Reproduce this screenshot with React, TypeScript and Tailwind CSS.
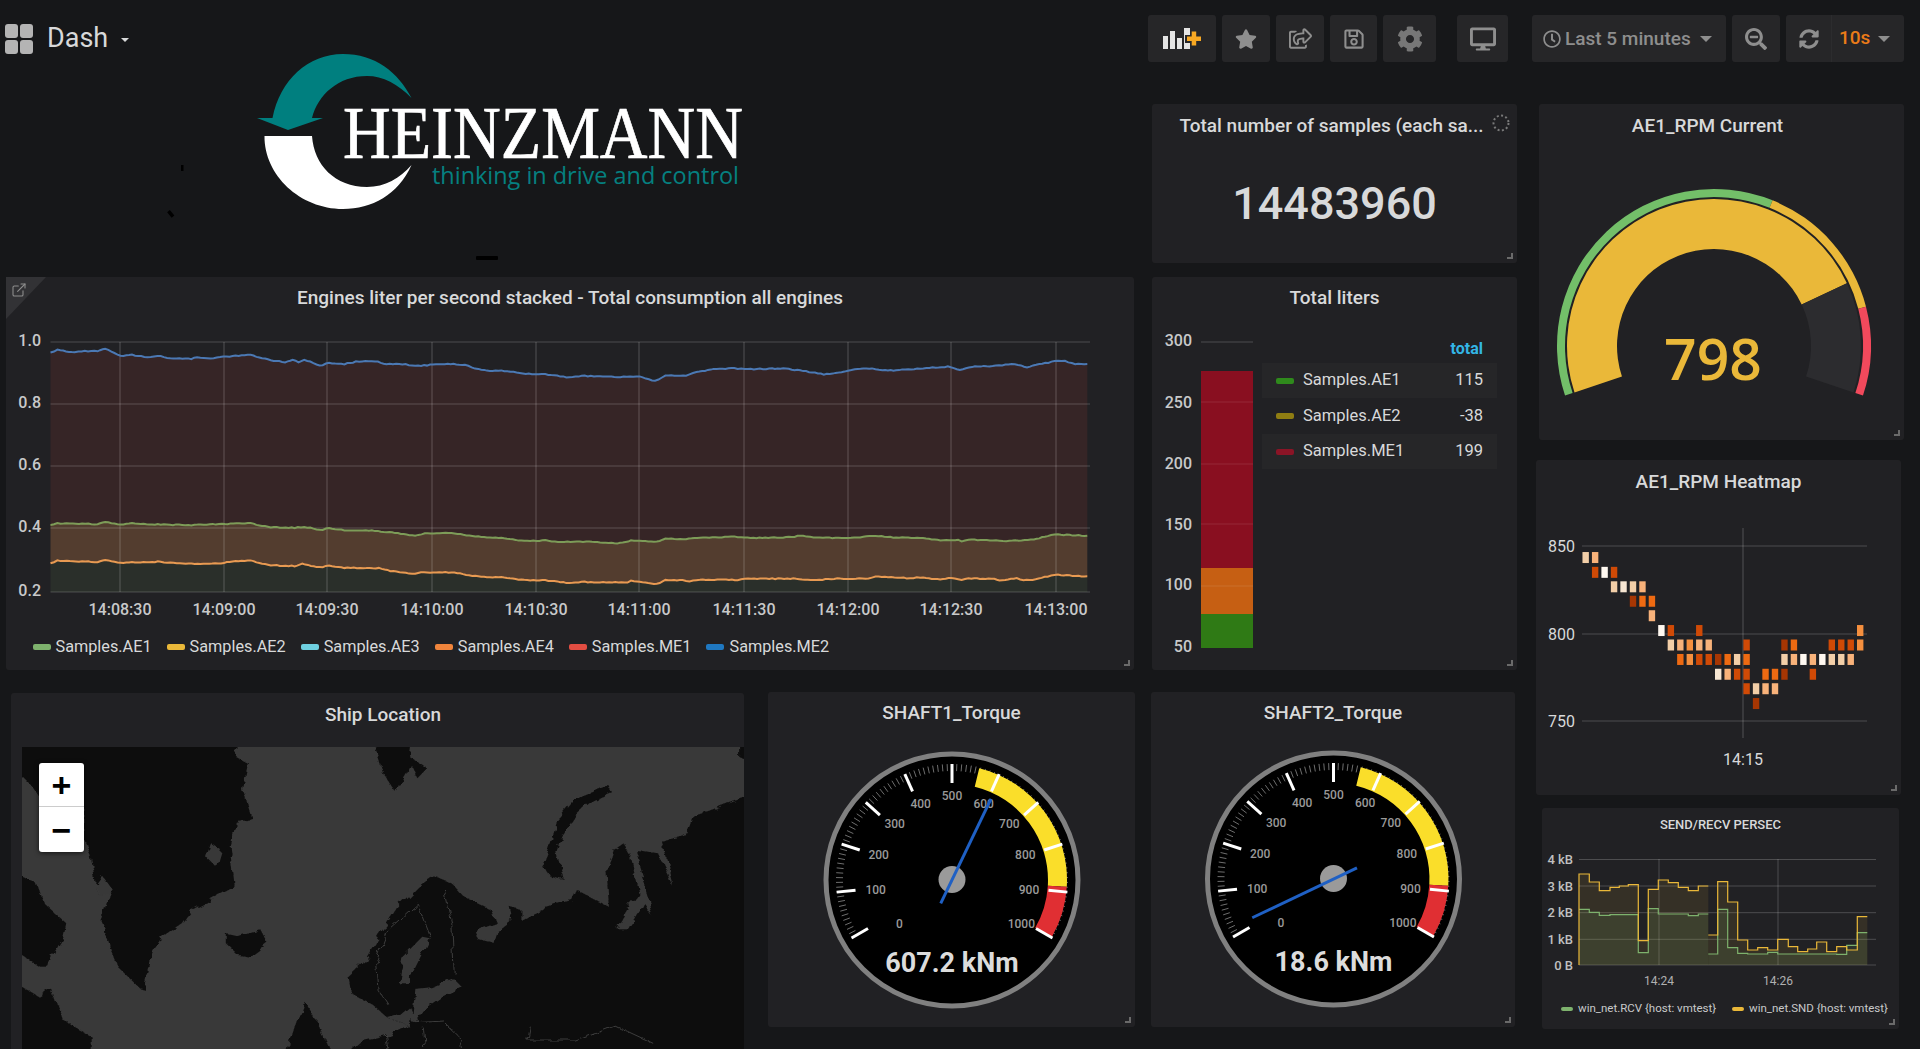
import React from "react";
import { FaStar, FaRegShareSquare, FaRegSave, FaCog, FaDesktop, FaRegClock, FaSearchMinus, FaSyncAlt } from "react-icons/fa";
import { ExternalLink } from "lucide-react";

type P = [number, number];

const z3 = (a: number[][]): P[] => a.map(([x, y]) => [x / 2.6133, 270 + y / 3]);
const z4 = (a: number[][]): P[] => a.map(([x, y]) => [600 + x / 2.904, 270 + y / 3]);

function rough(pts: P[]): P[] {
  const out: P[] = [];
  for (let i = 0; i < pts.length - 1; i++) {
    const [x0, y0] = pts[i];
    const [x1, y1] = pts[i + 1];
    const n = Math.max(1, Math.round((x1 - x0) / 3));
    for (let k = 0; k < n; k++) {
      const t = k / n;
      const x = x0 + (x1 - x0) * t;
      const noise = Math.sin(x * 12.9898) * 43758.5453;
      const j = (noise - Math.floor(noise) - 0.5) * 0.9;
      out.push([x, y0 + (y1 - y0) * t + j]);
    }
  }
  out.push(pts[pts.length - 1]);
  return out;
}

const blue = rough([
  ...z3([[132,248],[150,240],[195,247],[205,243],[255,243],[275,235],[315,257],[345,255],[385,261],[420,258],[445,265],[500,266],[515,261],[550,265],[600,259],[655,255],[700,269],[745,277],[765,270],[780,276],[795,268],[835,287],[860,279],[900,282],[930,275],[980,273],[1010,282],[1060,283],[1085,288],[1170,281],[1215,285],[1250,298],[1280,302],[1310,302],[1390,313],[1425,313],[1480,321],[1520,318]]),
  ...z4([[0,318],[50,321],[115,320],[160,333],[190,317],[250,316],[280,306],[330,297],[390,295],[420,298],[500,296],[540,296],[590,303],[650,313],[710,305],[740,297],[790,295],[820,301],[860,301],[930,295],[1010,290],[1045,299],[1080,290],[1140,288],[1205,282],[1240,291],[1320,274],[1350,273],[1380,282],[1415,282]]),
]);
const green = rough([
  ...z3([[132,765],[150,760],[255,762],[275,755],[315,763],[345,760],[420,764],[500,765],[580,762],[655,760],[700,771],[770,773],[795,770],[835,780],[860,775],[900,780],[980,782],[1040,790],[1085,798],[1110,791],[1180,789],[1250,800],[1310,804],[1370,813],[1425,811],[1450,816],[1540,815]]),
  ...z4([[0,817],[50,820],[90,812],[165,815],[190,806],[250,807],[290,803],[390,800],[420,804],[540,802],[590,797],[620,803],[720,804],[800,797],[860,803],[930,803],[980,810],[1040,810],[1050,815],[1070,810],[1150,811],[1180,813],[1260,809],[1300,797],[1330,794],[1415,797]]),
]);
const orange = rough([
  ...z3([[132,880],[150,872],[255,876],[275,869],[315,878],[345,877],[420,875],[470,881],[570,881],[600,875],[655,872],[700,885],[770,888],[790,882],[835,892],[860,887],[900,893],[990,895],[1020,903],[1085,912],[1100,907],[1180,907],[1210,912],[1250,920],[1310,922],[1370,930],[1425,931],[1480,938],[1520,936]]),
  ...z4([[0,937],[80,938],[90,933],[165,942],[190,930],[240,930],[260,934],[290,929],[400,930],[430,926],[570,926],[620,931],[680,926],[780,926],[800,919],[900,925],[930,922],[980,928],[1020,924],[1050,931],[1070,925],[1145,926],[1160,931],[1210,925],[1230,931],[1265,929],[1300,919],[1330,915],[1415,919]]),
]);

const line = (p: P[]) => p.map(([x, y], i) => `${i ? "L" : "M"}${x.toFixed(1)} ${y.toFixed(1)}`).join(" ");
const band = (top: P[], bottom: P[]) => line(top) + " " + [...bottom].reverse().map(([x, y]) => `L${x.toFixed(1)} ${y.toFixed(1)}`).join(" ") + " Z";
const floorLine: P[] = [[blue[0][0], 592], [blue[blue.length - 1][0], 592]];

const polar = (cx: number, cy: number, r: number, deg: number): P => {
  const a = ((deg - 90) * Math.PI) / 180;
  return [cx + r * Math.cos(a), cy + r * Math.sin(a)];
};
const arcBand = (cx: number, cy: number, r0: number, r1: number, a0: number, a1: number) => {
  const [x0, y0] = polar(cx, cy, r1, a0);
  const [x1, y1] = polar(cx, cy, r1, a1);
  const [x2, y2] = polar(cx, cy, r0, a1);
  const [x3, y3] = polar(cx, cy, r0, a0);
  const large = a1 - a0 > 180 ? 1 : 0;
  return `M${x0} ${y0} A${r1} ${r1} 0 ${large} 1 ${x1} ${y1} L${x2} ${y2} A${r0} ${r0} 0 ${large} 0 ${x3} ${y3} Z`;
};

function Resize() {
  return <div className="absolute right-[4px] bottom-[4px] w-[6px] h-[6px] border-r-2 border-b-2 border-[#6a6a6a]" />;
}

function Panel({ className, children }: { className: string; children: React.ReactNode }) {
  return <div className={`relative rounded-[3px] bg-[#212124] ${className}`}>{children}<Resize /></div>;
}

function Title({ text, className }: { text: string; className: string }) {
  return <div className={`flex items-center justify-center font-medium text-[19px] text-[#d8d9da] ${className}`}>{text}</div>;
}

function Btn({ className, children }: { className: string; children: React.ReactNode }) {
  return <div className={`h-[47px] flex items-center justify-center rounded-[3px] bg-[#262628] text-[#8e8e8e] ${className}`}>{children}</div>;
}

function Caret({ size }: { size: string }) {
  return <div className={`w-0 h-0 border-x-transparent ${size}`} />;
}

function Navbar() {
  return (
    <div className="h-[78px] shrink-0 flex items-start pt-[15px] pr-[16px]">
      <div className="flex items-center h-[47px] pl-[5px]">
        <div className="grid grid-cols-2 gap-[2px] w-[28px]">
          <div className="h-[14px] rounded-[3px] bg-[#b4b4b4]" />
          <div className="h-[14px] rounded-[3px] bg-[#b4b4b4]" />
          <div className="h-[14px] rounded-[3px] bg-[#b4b4b4]" />
          <div className="h-[14px] rounded-[3px] bg-[#b4b4b4]" />
        </div>
        <span className="ml-[14px] text-[27px] text-[#d8d9da]">Dash</span>
        <div className="ml-[13px] mt-[3px]">
          <Caret size="border-x-[4px] border-t-[4px] border-t-[#d8d9da]" />
        </div>
      </div>
      <div className="ml-auto flex gap-[6px]">
        <Btn className="w-[68px]">
          <svg width="38" height="21" viewBox="0 0 38 21">
            <rect x="0" y="8" width="5" height="13" fill="#e4e4e4" />
            <rect x="7" y="3" width="5" height="18" fill="#e4e4e4" />
            <rect x="14" y="10" width="5" height="11" fill="#e4e4e4" />
            <rect x="21" y="0" width="6" height="21" fill="#e4e4e4" />
            <rect x="22" y="7" width="16" height="8" fill="#262628" />
            <rect x="24" y="8.5" width="14" height="4.5" fill="#f7a823" />
            <rect x="28.7" y="3.5" width="4.5" height="14" fill="#f7a823" />
          </svg>
        </Btn>
        <Btn className="w-[48px]"><FaStar size={22} /></Btn>
        <Btn className="w-[48px]"><FaRegShareSquare size={23} /></Btn>
        <Btn className="w-[47px]"><FaRegSave size={22} /></Btn>
        <Btn className="w-[53px]"><FaCog size={26} className="text-[#777]" /></Btn>
        <Btn className="w-[51px] ml-[15px]"><FaDesktop size={26} /></Btn>
        <Btn className="w-[194px] ml-[18px] justify-start pl-[11px]">
          <FaRegClock size={18} />
          <span className="ml-[4px] text-[19px] font-medium leading-none">Last 5 minutes</span>
          <div className="ml-[9px]"><Caret size="border-x-[6px] border-t-[6px] border-t-[#8e8e8e]" /></div>
        </Btn>
        <Btn className="w-[48px]"><FaSearchMinus size={22} /></Btn>
        <Btn className="w-[118px] justify-start">
          <div className="w-[46px] h-full flex items-center justify-center border-r border-[#2c2c2e]"><FaSyncAlt size={20} /></div>
          <span className="ml-[7px] text-[19px] font-medium text-[#eb7b18]">10s</span>
          <div className="ml-[8px]"><Caret size="border-x-[6px] border-t-[6px] border-t-[#8e8e8e]" /></div>
        </Btn>
      </div>
    </div>
  );
}

function Logo() {
  return (
    <svg width="640" height="215" viewBox="160 50 640 215" className="block ml-[160px] mt-[-28px] shrink-0">
      <path d="M257 118 L272.5 118 C 280 80 308 54 343 54 C 375 54 398 72 411.5 98 C 398 84 383 76 367 76 C 338 76 318 95 312 118 L323 118 L288 130 Z" fill="#007f7f" />
      <path d="M264.5 136 L312 136 C 314 165 335 187 367 187 C 385 187 400 178 411.5 165 C 398 195 372 209 343 209 C 300 209 264 175 264.5 136 Z" fill="#ffffff" />
      <text x="343" y="158" textLength="400" lengthAdjust="spacingAndGlyphs" stroke="#ffffff" strokeWidth="0.7" className="font-[family-name:'Liberation_Serif',serif] text-[73px]" fill="#ffffff">HEINZMANN</text>
      <text x="432" y="184" textLength="307" lengthAdjust="spacingAndGlyphs" className="font-[family-name:'Open_Sans',sans-serif] text-[24px]" fill="#058080">thinking in drive and control</text>
      <rect x="181" y="165" width="2.5" height="6" fill="#000" />
      <rect x="168" y="212" width="7" height="3.5" fill="#000" transform="rotate(50 171 213)" />
      <rect x="476" y="256" width="22" height="4" rx="1" fill="#000" />
    </svg>
  );
}

function SingleStat() {
  return (
    <Panel className="w-[365px] h-[159px] mt-[26px] ml-auto">
      <Title text="Total number of samples (each sa..." className="h-[45px] pr-[6px]" />
      <svg width="18" height="18" viewBox="0 0 18 18" className="absolute left-[340px] top-[10px]">
        <circle cx="9" cy="9" r="7.5" fill="none" stroke="#7a7a7a" strokeWidth="2" strokeDasharray="2 2.4" />
      </svg>
      <div className="h-[109px] flex items-center justify-center text-[45px] font-medium text-[#d8d9da] leading-none">14483960</div>
    </Panel>
  );
}

const gridYs = [342, 404, 466, 528, 592];
const gridYLabels = ["1.0", "0.8", "0.6", "0.4", "0.2"];
const gridXs = [120, 224, 327, 432, 536, 639, 744, 848, 951, 1056];
const timeLabels = ["14:08:30", "14:09:00", "14:09:30", "14:10:00", "14:10:30", "14:11:00", "14:11:30", "14:12:00", "14:12:30", "14:13:00"];

const legend = [
  ["Samples.AE1", "bg-[#7eb26d]"],
  ["Samples.AE2", "bg-[#eab839]"],
  ["Samples.AE3", "bg-[#6ed0e0]"],
  ["Samples.AE4", "bg-[#ef843c]"],
  ["Samples.ME1", "bg-[#e24d42]"],
  ["Samples.ME2", "bg-[#1f78c1]"],
];

function GraphPanel() {
  return (
    <Panel className="w-[1128px] h-[393px] shrink-0">
      <div className="absolute left-0 top-0 w-0 h-0 border-t-[42px] border-r-[40px] border-t-[#323235] border-r-transparent" />
      <ExternalLink size={16} strokeWidth={1.6} className="absolute left-[5px] top-[5px] text-[#8e8e8e]" />
      <Title text="Engines liter per second stacked - Total consumption all engines" className="h-[42px]" />
      <svg width="1128" height="306" viewBox="6 319 1128 306" className="block">
        <path d={band(blue, green)} fill="#362526" />
        <path d={band(green, orange)} fill="#533d2f" />
        <path d={band(orange, floorLine)} fill="#2a2f2a" />
        {gridYs.map((y, i) => (
          <g key={y}>
            <line x1="50.5" x2="1090" y1={y} y2={y} stroke="#ffffff" strokeOpacity="0.2" />
            <text x="41" y={y + 4} textAnchor="end" className="text-[16px] font-medium" fill="#c8c9ca">{gridYLabels[i]}</text>
          </g>
        ))}
        {gridXs.map((x, i) => (
          <g key={x}>
            <line x1={x} x2={x} y1="342" y2="592" stroke="#ffffff" strokeOpacity="0.22" />
            <text x={x} y="614.5" textAnchor="middle" className="text-[16px] font-medium" fill="#c8c9ca">{timeLabels[i]}</text>
          </g>
        ))}
        <path d={line(blue)} fill="none" stroke="#4b79b4" strokeWidth="2" />
        <path d={line(green)} fill="none" stroke="#7d9c58" strokeWidth="2" />
        <path d={line(orange)} fill="none" stroke="#e89a52" strokeWidth="2" />
      </svg>
      <div className="flex items-center pl-[26.5px] gap-[15px] mt-[1px] h-[42px]">
        {legend.map(([t, c]) => (
          <div key={t} className="flex items-center gap-[5px]">
            <div className={`w-[18px] h-[6px] rounded-[2px] ${c}`} />
            <span className="text-[16.25px] text-[#d8d9da] leading-none">{t}</span>
          </div>
        ))}
      </div>
    </Panel>
  );
}

const totals = [
  ["Samples.AE1", "115", "bg-[#2f8a1c]", true],
  ["Samples.AE2", "-38", "bg-[#8f7d12]", false],
  ["Samples.ME1", "199", "bg-[#8b1426]", true],
] as const;

function TotalPanel() {
  return (
    <Panel className="w-[365px] h-[393px] ml-[18px] shrink-0">
      <Title text="Total liters" className="h-[42px]" />
      <div className="flex">
        <svg width="102" height="340" viewBox="1152 319 102 340" className="block shrink-0">
          <line x1="1201" x2="1253" y1="342" y2="342" stroke="#ffffff" strokeOpacity="0.2" />
          <rect x="1201" y="371" width="52" height="197" fill="#890f20" />
          <rect x="1201" y="568" width="52" height="46" fill="#c65f13" />
          <rect x="1201" y="614" width="52" height="34" fill="#2f7a15" />
          {[402, 464, 524, 586].map((y) => (
            <line key={y} x1="1201" x2="1253" y1={y} y2={y} stroke="#ffffff" strokeOpacity="0.1" />
          ))}
          {[["300", 340], ["250", 402], ["200", 463], ["150", 524], ["100", 584], ["50", 646]].map(([t, y]) => (
            <text key={t as string} x="1192" y={(y as number) + 5.5} textAnchor="end" className="text-[16px] font-medium" fill="#c8c9ca">{t}</text>
          ))}
        </svg>
        <div className="ml-[8px] w-[235px] flex flex-col">
          <div className="h-[22px] mt-[19px] mb-[3px] pr-[14px] flex items-center justify-end text-[16px] font-bold text-[#33b5e5]">total</div>
          {totals.map(([n, v, c, shaded]) => (
            <div key={n} className={`h-[35px] mb-[0.5px] pl-[14px] pr-[14px] flex items-center text-[16.5px] text-[#d8d9da] ${shaded ? "bg-[#262628]" : ""}`}>
              <div className={`w-[18px] h-[6px] rounded-[2px] ${c}`} />
              <span className="ml-[9px]">{n}</span>
              <span className="ml-auto">{v}</span>
            </div>
          ))}
        </div>
      </div>
    </Panel>
  );
}

function MapPanel() {
  return (
    <div className="relative w-[733px] h-[356px] mt-[1px] ml-[11px] shrink-0 rounded-t-[3px] bg-[#212124] flex flex-col">
      <Title text="Ship Location" className="h-[44px] mb-[10px] pl-[11px] shrink-0" />
      <div className="relative ml-[11px] flex-1 overflow-hidden bg-[#393939]">
        <svg width="722" height="302" viewBox="45 171 1470 906" preserveAspectRatio="none" className="block">
          <defs>
            <filter id="coast" x="-5%" y="-5%" width="110%" height="110%">
              <feTurbulence type="fractalNoise" baseFrequency="0.035" numOctaves="3" seed="7" result="n" />
              <feDisplacementMap in="SourceGraphic" in2="n" scale="18" />
            </filter>
          </defs>
          <g fill="#0e0e0e" filter="url(#coast)">
            <path d="M20 130 L490 130 L480 200 L505 220 L495 300 L505 345 L512 385 L480 400 L470 470 L478 590 L440 620 L390 660 L370 700 L330 740 L310 790 L295 900 L285 895 L240 830 L225 770 L205 690 L225 610 L195 580 L185 500 L170 440 L170 350 L80 320 L60 280 L20 220 Z" />
            <path d="M20 540 L75 580 L90 640 L135 700 L130 740 L110 790 L100 830 L80 830 L20 770 Z" />
            <path d="M20 870 L80 920 L105 895 L130 990 L185 1040 L185 1110 L20 1110 Z" />
            <path d="M460 730 L480 735 L530 718 L545 760 L510 800 L485 795 L460 760 Z" />
            <path d="M755 130 L840 130 L835 200 L870 235 L850 265 L835 225 L805 305 L780 250 L770 200 Z" />
            <path d="M1240 285 L1248 310 L1200 340 L1170 380 L1145 440 L1135 490 L1150 570 L1120 560 L1105 525 L1120 470 L1135 390 L1170 330 L1225 295 Z" />
            <path d="M710 860 L740 820 L770 740 L810 650 L850 590 L885 558 L920 580 L945 620 L1000 660 L1010 700 L965 725 L975 750 L1005 760 L1010 730 L1045 690 L1040 650 L1060 660 L1060 690 L1110 650 L1165 630 L1175 600 L1240 650 L1235 540 L1250 480 L1270 460 L1285 500 L1300 610 L1285 640 L1255 715 L1280 715 L1310 640 L1330 680 L1320 620 L1295 480 L1340 490 L1370 590 L1350 455 L1400 430 L1410 380 L1540 310 L1540 1110 L690 1110 L735 1050 L790 1035 L830 1005 L790 985 L760 945 L715 910 Z" />
            <path d="M620 935 L640 980 L650 1010 L680 1110 L580 1110 L600 1010 Z" />
            <path d="M1505 130 L1540 130 L1540 225 L1505 200 Z" />
          </g>
          <g fill="#393939" filter="url(#coast)">
            <path d="M860 740 L875 745 L850 820 L830 880 L810 880 L820 800 Z" />
            <path d="M925 868 L940 890 L900 920 L870 950 L850 990 L840 1000 L848 900 L880 895 Z" />
            <path d="M790 985 L830 1005 L845 985 L835 950 L815 975 Z" />
            <path d="M430 460 L450 480 L440 530 L420 500 Z" />
            <path d="M210 560 L230 600 L205 620 L195 590 Z" />
          </g>
          <g fill="none" stroke="#555555" strokeWidth="1.6" filter="url(#coast)">
            <path d="M850 640 L790 720 L765 820 L770 900 L790 945" />
            <path d="M850 640 L875 740" />
            <path d="M905 600 L920 700 L925 850" />
            <path d="M845 995 L900 990 L935 1040 L940 1077" />
            <path d="M1080 1010 L1075 1050 L1170 1050 L1250 1005 L1330 1060" />
            <path d="M785 1035 L790 1077 M860 1010 L865 1077" />
          </g>
        </svg>
        <div className="absolute left-[17px] top-[16px] w-[45px] h-[89px] rounded-[3px] bg-white flex flex-col shadow-[0_1px_5px_rgba(0,0,0,0.65)] text-black font-bold font-[family-name:'Liberation_Sans',sans-serif]">
          <div className="h-[44px] flex items-center justify-center border-b border-[#cccccc] text-[34px] leading-none">+</div>
          <div className="flex-1 flex items-center justify-center text-[34px] leading-none">−</div>
        </div>
      </div>
    </div>
  );
}

const dialLabels: [string, number, number][] = [
  ["0", 387, 703], ["100", 316, 600], ["200", 325, 495], ["300", 373, 402], ["400", 451, 341], ["500", 545, 318],
  ["600", 640, 341], ["700", 717, 402], ["800", 765, 495], ["900", 776, 600], ["1000", 753, 703],
];

function Dial({ title, value, needle, ox, oy, className }: { title: string; value: string; needle: number; ox: number; oy: number; className: string }) {
  const w = title === "SHAFT1_Torque" ? 367 : 364;
  const minors: number[] = [];
  for (let a = -120; a <= 120.01; a += 2.4) minors.push(a);
  const majors: number[] = [];
  for (let a = -120; a <= 120; a += 24) majors.push(a);
  const [tx, ty] = polar(0, 0, 90, needle);
  const [bx, by] = polar(0, 0, 26, needle + 180);
  return (
    <Panel className={`h-[335px] shrink-0 ${className}`}>
      <Title text={title} className="h-[42px]" />
      <svg width={w} height="293" viewBox={`${-ox} ${-oy} ${w} 293`} className="block">
        <circle r="126" fill="#000000" stroke="#808080" strokeWidth="5" />
        {minors.map((a) => {
          const [x0, y0] = polar(0, 0, 109, a);
          const [x1, y1] = polar(0, 0, 116, a);
          return <line key={a} x1={x0} y1={y0} x2={x1} y2={y1} stroke="#6e6e6e" strokeWidth="1" />;
        })}
        <path d={arcBand(0, 0, 96, 115, 13.7, 93.4)} fill="#fade2a" />
        <path d={arcBand(0, 0, 96, 115, 93.4, 120)} fill="#e02f33" />
        {majors.map((a) => {
          const [x0, y0] = polar(0, 0, 97, a);
          const [x1, y1] = polar(0, 0, 116, a);
          return <line key={a} x1={x0} y1={y0} x2={x1} y2={y1} stroke="#ffffff" strokeWidth="3" />;
        })}
        {dialLabels.map(([t, x, y]) => (
          <text key={t} x={(x - 545) / 3} y={(y - 570) / 3 + 4} textAnchor="middle" className="text-[12px] font-medium" fill="#9a9a9a">{t}</text>
        ))}
        <circle r="13.5" cy="-0.5" fill="#9a9a9a" />
        <line x1={bx} y1={by} x2={tx} y2={ty} stroke="#1f60c4" strokeWidth="3" />
        <text x="0" y="92" textAnchor="middle" className="text-[27px] font-bold" fill="#dcdcdc">{value}</text>
      </svg>
    </Panel>
  );
}

function RpmGauge() {
  const cx = 1714;
  const cy = 346;
  return (
    <Panel className="w-[365px] h-[336px] mt-[26px] ml-[3px]">
      <Title text="AE1_RPM Current" className="h-[45px] pr-[28px]" />
      <svg width="365" height="291" viewBox="1539 149 365 291" className="block">
        <path d={arcBand(cx, cy, 149, 157, -108.4, 21.9)} fill="#73bf69" />
        <path d={arcBand(cx, cy, 149, 157, 21.9, 75.5)} fill="#eab839" />
        <path d={arcBand(cx, cy, 149, 157, 75.5, 108.4)} fill="#f2495c" />
        <path d={arcBand(cx, cy, 97, 147, -108.4, 64.7)} fill="#eab839" />
        <path d={arcBand(cx, cy, 97, 147, 64.7, 108.4)} fill="#2c2c2f" />
        <text x="1713" y="380" textAnchor="middle" className="font-[family-name:'Open_Sans',sans-serif] text-[57px] font-semibold" fill="#eab839">798</text>
      </svg>
    </Panel>
  );
}

const W = "#fff8f0", L0 = "#f7e6d2", L1 = "#f3cfa8", L2 = "#f8b27a", M = "#f58f3e", O = "#ee6a12", D = "#d04a06", X = "#a63603";
const heat: [number, [number, string][]][] = [
  [835, [[0, L1], [1, L2]]],
  [878, [[1, D], [2, W], [3, D]]],
  [920, [[3, L1], [4, L0], [5, L1], [6, L2]]],
  [962, [[5, X], [6, O], [7, O]]],
  [1004, [[7, L2]]],
  [1047, [[8, W], [9, D], [12, D], [29, M]]],
  [1089, [[9, L1], [10, L2], [11, M], [12, L2], [13, L2], [17, D], [21, X], [22, O], [26, D], [27, D], [28, D], [29, M]]],
  [1131, [[10, O], [11, M], [12, D], [13, D], [14, X], [15, O], [16, L1], [17, O], [21, L1], [22, L2], [23, W], [24, L2], [25, W], [26, L1], [27, L1], [28, L2]]],
  [1174, [[14, L0], [15, L2], [16, D], [17, D], [19, O], [20, O], [21, X], [24, D]]],
  [1216, [[17, D], [18, L1], [19, L2], [20, L2]]],
  [1259, [[18, X]]],
];

function Heatmap() {
  return (
    <Panel className="w-[365px] h-[335px] mt-[20px]">
      <Title text="AE1_RPM Heatmap" className="h-[44px]" />
      <svg width="365" height="291" viewBox="1536 504 365 291" className="block">
        {[[546, "850"], [634, "800"], [721, "750"]].map(([y, t]) => (
          <g key={t as string}>
            <line x1="1582" x2="1867" y1={y} y2={y} stroke="#ffffff" strokeOpacity="0.2" />
            <text x="1575" y={(y as number) + 5.5} textAnchor="end" className="text-[16px]" fill="#d8d9da">{t}</text>
          </g>
        ))}
        <line x1="1743" x2="1743" y1="528" y2="738" stroke="#ffffff" strokeOpacity="0.22" />
        {heat.flatMap(([zy, cells]) =>
          cells.map(([c, color]) => (
            <rect key={`${zy}-${c}`} x={1530 + (167 + 28.4 * c) / 3 - 3.2} y={270 + zy / 2.904 - 5.5} width="6.4" height="11" fill={color} />
          ))
        )}
        <text x="1743" y="764.5" textAnchor="middle" className="text-[16px]" fill="#d8d9da">14:15</text>
      </svg>
    </Panel>
  );
}

const yellowSteps: [number, number, number][] = [[147,178,222],[178,208,246],[208,240,272],[240,268,262],[268,295,258],[295,325,254],[325,355,422],[355,385,268],[385,415,240],[415,445,248],[445,475,262],[475,505,272],[505,535,258]];
const yellowSteps2: [number, number, number][] = [[535,563,405],[563,593,245],[593,623,306],[623,653,420],[653,683,450],[683,713,443],[713,743,450],[743,775,418],[775,803,440],[803,833,455],[833,860,447],[860,890,426],[890,920,455],[920,950,440],[950,982,450],[982,1012,350]];
const greenSteps: [number, number, number][] = [[147,178,328],[178,208,337],[208,240,346],[240,325,344],[325,355,458],[355,385,326],[385,475,342],[475,505,347],[505,535,342]];
const greenSteps2: [number, number, number][] = [[535,563,462],[563,593,328],[593,623,443],[623,653,460],[653,713,462],[713,743,457],[743,920,462],[920,950,463],[950,982,436],[982,1012,398]];
const stepPath = (s: [number, number, number][]) => {
  const pt = (x: number, y: number) => `${(1530 + x / 3).toFixed(1)} ${(800 + y / 3).toFixed(1)}`;
  return s.map(([a, b, y], i) => `${i ? "L" : "M"}${pt(a, y)} L${pt(b, y)}`).join(" ");
};
const stepFill = (s: [number, number, number][]) => {
  const x0 = 1530 + s[0][0] / 3;
  const x1 = 1530 + s[s.length - 1][1] / 3;
  const y = 800 + 495 / 3;
  return `${stepPath(s)} L${x1.toFixed(1)} ${y} L${x0.toFixed(1)} ${y} Z`;
};

function SendPanel() {
  return (
    <Panel className="w-[357px] h-[221px] mt-[13px] ml-[6px]">
      <Title text="SEND/RECV PERSEC" className="h-[34px] !text-[13px]" />
      <svg width="357" height="147" viewBox="1542 842 357 147" className="block">
        {[[859.5, "4 kB"], [886, "3 kB"], [912.7, "2 kB"], [939.3, "1 kB"], [965, "0 B"]].map(([y, t]) => (
          <g key={t as string}>
            <line x1="1579" x2="1876" y1={y} y2={y} stroke="#ffffff" strokeOpacity="0.2" />
            <text x="1573" y={(y as number) + 4.5} textAnchor="end" className="text-[13px] font-medium" fill="#c0c0c0">{t}</text>
          </g>
        ))}
        {[[1659, "14:24"], [1778, "14:26"]].map(([x, t]) => (
          <g key={t as string}>
            <line x1={x} x2={x} y1="859" y2="965" stroke="#ffffff" strokeOpacity="0.2" />
            <text x={x} y="984.5" textAnchor="middle" className="text-[12px]" fill="#b0b0b0">{t}</text>
          </g>
        ))}
        <path d={stepFill(yellowSteps)} fill="#eab839" fillOpacity="0.1" />
        <path d={stepFill(yellowSteps2)} fill="#eab839" fillOpacity="0.1" />
        <path d={stepFill(greenSteps)} fill="#7eb26d" fillOpacity="0.12" />
        <path d={stepFill(greenSteps2)} fill="#7eb26d" fillOpacity="0.12" />
        <path d={stepPath(greenSteps)} fill="none" stroke="#7eb26d" strokeWidth="1.2" />
        <path d={stepPath(greenSteps2)} fill="none" stroke="#7eb26d" strokeWidth="1.2" />
        <path d={`M1579 965 L1579 875 ${stepPath(yellowSteps).replace("M", "L")}`} fill="none" stroke="#eab839" strokeWidth="1.2" />
        <path d={stepPath(yellowSteps2)} fill="none" stroke="#eab839" strokeWidth="1.2" />
      </svg>
      <div className="h-[26px] mt-[7px] flex items-center pl-[19px] text-[11.5px] text-[#c8c9ca] leading-none">
        <div className="w-[12px] h-[4px] rounded-[2px] bg-[#7eb26d]" />
        <span className="ml-[5px] w-[154px] whitespace-nowrap">win_net.RCV {"{host: vmtest}"}</span>
        <div className="w-[12px] h-[4px] rounded-[2px] bg-[#eab839]" />
        <span className="ml-[5px] whitespace-nowrap">win_net.SND {"{host: vmtest}"}</span>
      </div>
    </Panel>
  );
}

export default function App() {
  return (
    <div className="w-[1920px] h-[1049px] overflow-hidden flex flex-col bg-[#161719] font-[family-name:Roboto,sans-serif]">
      <Navbar />
      <div className="flex flex-1 min-h-0">
        <div className="w-[1536px] shrink-0 flex flex-col">
          <div className="h-[199px] flex items-start shrink-0 relative">
            <Logo />
            <div className="ml-auto mr-[19px]">
              <SingleStat />
            </div>
          </div>
          <div className="flex pl-[6px] shrink-0">
            <GraphPanel />
            <TotalPanel />
          </div>
          <div className="flex mt-[22px]">
            <MapPanel />
            <Dial title="SHAFT1_Torque" value="607.2 kNm" needle={25.7} ox={184} oy={146} className="w-[367px] ml-[24px]" />
            <Dial title="SHAFT2_Torque" value="18.6 kNm" needle={-115.5} ox={182.5} oy={145} className="w-[364px] ml-[16px]" />
          </div>
        </div>
        <div className="flex-1 flex flex-col">
          <RpmGauge />
          <Heatmap />
          <SendPanel />
        </div>
      </div>
    </div>
  );
}
